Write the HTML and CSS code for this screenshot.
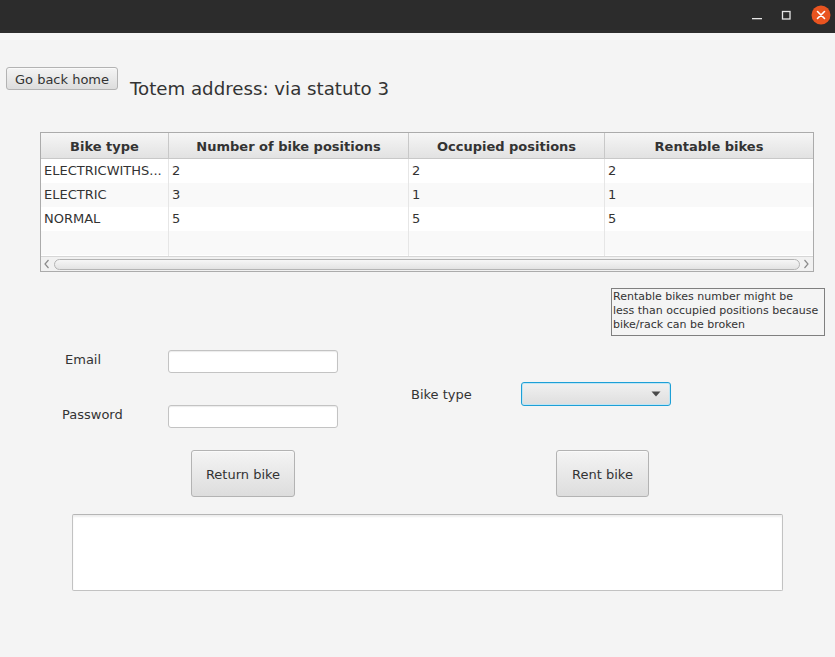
FILE: index.html
```html
<!DOCTYPE html>
<html>
<head>
<meta charset="utf-8">
<link rel="stylesheet" href="styles.css">
</head>
<body>
<div class="titlebar">
  <div class="wbtn min"><svg width="12" height="12" viewBox="0 0 12 12"><rect x="1" y="8" width="10" height="1.3" fill="#e6e6e6"/></svg></div>
  <div class="wbtn max"><svg width="12" height="12" viewBox="0 0 12 12"><rect x="2.5" y="2.5" width="7.5" height="7.5" fill="none" stroke="#e6e6e6" stroke-width="1.3"/></svg></div>
  <div class="wbtn close"><svg width="20" height="20" viewBox="0 0 20 20"><circle cx="10" cy="10" r="9.5" fill="#e95420"/><path d="M6.5 6.5 L13.5 13.5 M13.5 6.5 L6.5 13.5" stroke="#fff" stroke-width="1.6" stroke-linecap="round"/></svg></div>
</div>
<div class="app">
  <div class="top">
    <button class="btn home">Go back home</button>
    <div class="title">Totem address: via statuto 3</div>
  </div>
  <div class="table">
    <div class="row head">
      <div class="cell">Bike type</div>
      <div class="cell">Number of bike positions</div>
      <div class="cell">Occupied positions</div>
      <div class="cell last">Rentable bikes</div>
    </div>
    <div class="body">
      <div class="row">
        <div class="cell">ELECTRICWITHS...</div>
        <div class="cell">2</div>
        <div class="cell">2</div>
        <div class="cell last">2</div>
      </div>
      <div class="row odd">
        <div class="cell">ELECTRIC</div>
        <div class="cell">3</div>
        <div class="cell">1</div>
        <div class="cell last">1</div>
      </div>
      <div class="row">
        <div class="cell">NORMAL</div>
        <div class="cell">5</div>
        <div class="cell">5</div>
        <div class="cell last">5</div>
      </div>
      <div class="row odd">
        <div class="cell"></div>
        <div class="cell"></div>
        <div class="cell"></div>
        <div class="cell last"></div>
      </div>
      <div class="row stub">
        <div class="cell"></div>
        <div class="cell"></div>
        <div class="cell"></div>
        <div class="cell last"></div>
      </div>
    </div>
    <div class="hscroll">
      <svg class="arrow" width="8" height="10" viewBox="0 0 8 10"><path d="M5.5 1 L2 5 L5.5 9" fill="none" stroke="#8a8a8a" stroke-width="1.2"/></svg>
      <div class="thumb"></div>
      <svg class="arrow" width="8" height="10" viewBox="0 0 8 10"><path d="M2.5 1 L6 5 L2.5 9" fill="none" stroke="#8a8a8a" stroke-width="1.2"/></svg>
    </div>
  </div>
  <div class="note">Rentable bikes number might be<br>less than occupied positions because<br>bike/rack can be broken</div>
  <div class="form">
    <div class="creds">
      <div class="field">
        <span class="lbl email">Email</span>
        <div class="input"></div>
      </div>
      <div class="field">
        <span class="lbl pass">Password</span>
        <div class="input"></div>
      </div>
    </div>
    <div class="pick">
      <span class="lbl">Bike type</span>
      <div class="combo"><svg width="10" height="6" viewBox="0 0 10 6"><path d="M0.5 0.5 L9.5 0.5 L5 5.5 Z" fill="#4a4a4a"/></svg></div>
    </div>
  </div>
  <div class="actions">
    <button class="btn big ret">Return bike</button>
    <button class="btn big rent">Rent bike</button>
  </div>
  <div class="textarea"></div>
</div>
</body>
</html>
```
FILE: styles.css
```css
html, body {
  margin: 0;
  padding: 0;
  background: #f4f4f4;
  font-family: "DejaVu Sans", sans-serif;
  font-size: 13px;
  color: #333;
}
.titlebar {
  height: 33px;
  background: #2c2c2c;
  display: flex;
  justify-content: flex-end;
  align-items: center;
}
.wbtn {
  display: flex;
  align-items: center;
  justify-content: center;
}
.wbtn.min { width: 12px; height: 12px; margin-right: 17px; margin-top: -2px; }
.wbtn.max { width: 12px; height: 12px; margin-right: 19px; margin-top: -4px; }
.wbtn.close { width: 20px; height: 20px; margin-right: 4px; margin-top: -4px; }
.app {
  display: flex;
  flex-direction: column;
  align-items: flex-start;
}
.top {
  display: flex;
  align-items: flex-start;
  padding: 34px 0 0 6px;
}
.btn {
  font-family: "DejaVu Sans", sans-serif;
  font-size: 13px;
  color: #333;
  border: 1px solid #b3b3b3;
  border-radius: 3px;
  background: linear-gradient(#f4f4f4, #dddddd);
  box-shadow: inset 0 1px 0 #fafafa;
  padding: 0;
  margin: 0;
}
.home {
  width: 112px;
  height: 23px;
  padding-top: 1px;
}
.title {
  font-size: 18.2px;
  line-height: 21px;
  margin: 11px 0 0 12px;
  color: #333;
}
.table {
  margin: 33px 0 0 40px;
  width: 772px;
  border: 1px solid #ababab;
  background: #fff;
}
.row {
  display: grid;
  grid-template-columns: 128px 240px 196px 208px;
  height: 24px;
}
.cell {
  border-right: 1px solid #e6e6e6;
  padding: 0 3px;
  line-height: 24px;
  white-space: nowrap;
  overflow: hidden;
}
.cell.last { border-right: none; }
.row.odd { background: #f9f9f9; }
.row.stub { height: 1px; }
.body { height: 97px; overflow: hidden; }
.head {
  height: 25px;
  border-bottom: 1px solid #c8c8c8;
  background: linear-gradient(#f6f6f6, #e2e2e2);
  font-weight: bold;
}
.head .cell {
  text-align: center;
  line-height: 27px;
  border-right: 1px solid #c8c8c8;
}
.head .cell.last { border-right: none; }
.hscroll {
  height: 15px;
  border-top: 1px solid #d6d6d6;
  background: #f1f1f1;
  display: flex;
  align-items: center;
  padding: 0 3px 0 2px;
  box-sizing: border-box;
}
.arrow { flex: none; }
.thumb {
  flex: 1;
  height: 9px;
  margin: 0 2px 0 3px;
  border: 1px solid #b4b4b4;
  border-radius: 6px;
  background: linear-gradient(#f6f6f6, #e3e3e3);
}
.note {
  margin: 16px 0 0 611px;
  width: 210px;
  height: 44px;
  border: 1px solid #7f7f7f;
  padding: 1px;
  font-size: 11px;
  line-height: 14px;
  color: #333;
  white-space: nowrap;
}
.form {
  display: flex;
  align-items: flex-start;
  margin-top: 14px;
  margin-left: 62px;
}
.creds {
  display: flex;
  flex-direction: column;
  gap: 32px;
}
.field {
  display: flex;
  align-items: center;
}
.lbl { display: block; margin-top: -4px; }
.lbl.email { width: 103px; padding-left: 3px; }
.lbl.pass { width: 106px; }
.input {
  width: 168px;
  height: 21px;
  border: 1px solid #c3c3c3;
  border-radius: 3px;
  background: #fff;
  box-shadow: inset 0 1px 1px #ececec;
}
.pick {
  display: flex;
  align-items: center;
  margin: 32px 0 0 73px;
}
.pick .lbl { width: 110px; margin-top: 0; }
.combo {
  width: 146px;
  height: 20px;
  border: 1px solid #1d9fd6;
  border-radius: 3px;
  box-shadow: inset 0 0 0 1px #bfe5f4;
  background: linear-gradient(#f1f1f1, #dedede);
  display: flex;
  align-items: center;
  justify-content: flex-end;
  padding: 1px;
}
.combo svg { margin-right: 8px; }
.actions {
  display: flex;
  margin-top: 22px;
}
.big { height: 47px; padding-top: 2px; }
.ret { width: 104px; margin-left: 191px; }
.rent { width: 93px; margin-left: 261px; }
.textarea {
  margin: 17px 0 0 72px;
  width: 709px;
  height: 75px;
  border: 1px solid #c2c2c2;
  border-top-color: #b5b5b5;
  border-radius: 2px;
  background: #fff;
  box-shadow: inset 0 2px 2px #eeeeee;
}
```
